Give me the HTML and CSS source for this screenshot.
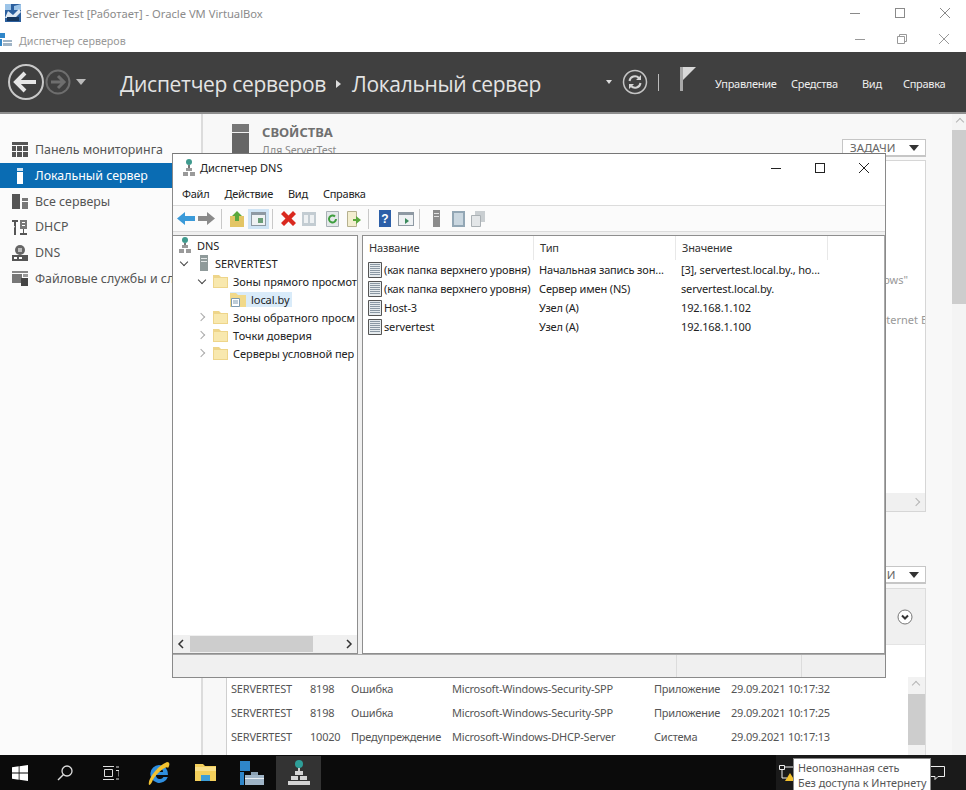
FILE: index.html
```html
<!DOCTYPE html>
<html lang="ru">
<head>
  <meta charset="UTF-8" />
  <title>Server Test [Работает] - Oracle VM VirtualBox</title>
  <link rel="stylesheet" href="styles.css">
</head>
<body>
  <!-- окно VirtualBox -->
  <div class="vbox-bar">
    <svg class="vbox-icon" width="16" height="18" viewBox="0 0 16 18">
      <rect width="16" height="18" fill="#2b5f9e"/>
      <path d="M0 0h6v6H0zM9 2l7-2v6H9z" fill="#9cc4e8"/>
      <path d="M3 7l5 4 6-6 2 3-6 6H0z" fill="#dfe9f3"/>
      <rect x="2" y="13" width="12" height="4" fill="#16375f"/>
    </svg>
    <span class="vbox-title">Server Test [Работает] - Oracle VM VirtualBox</span>
    <div class="win-btns vbox-btns">
      <svg width="12" height="12" viewBox="0 0 12 12"><path d="M1 6.500h10" stroke="#8a8a8a"/></svg>
      <svg width="12" height="12" viewBox="0 0 12 12"><rect x="1.500" y="1.500" width="9" height="9" fill="none" stroke="#8a8a8a"/></svg>
      <svg width="12" height="12" viewBox="0 0 12 12"><path d="M1 1l10 10M11 1L1 11" stroke="#8a8a8a"/></svg>
    </div>
  </div>

  <div class="app-bar">
    <svg class="app-icon" width="14" height="14" viewBox="0 0 14 14">
      <path d="M0 0h6v5H0z" fill="#2f86c9"/>
      <path d="M0 6h3v7H0z" fill="#2f86c9"/>
      <path d="M4 7h9v6H4z" fill="#9fb4c6"/>
      <path d="M4 9h9v1H4z" fill="#fff"/>
    </svg>
    <span class="app-title">Диспетчер серверов</span>
    <div class="win-btns app-btns">
      <svg width="12" height="12" viewBox="0 0 12 12"><path d="M1 6.500h10" stroke="#999"/></svg>
      <svg width="12" height="12" viewBox="0 0 12 12"><path d="M1.500 3.500h7v7h-7zM3.500 3.500v-2h7v7h-2" fill="none" stroke="#999"/></svg>
      <svg width="12" height="12" viewBox="0 0 12 12"><path d="M1 1l10 10M11 1L1 11" stroke="#999"/></svg>
    </div>
  </div>

  <header class="sm-header">
    <svg class="nav-back" width="38" height="38" viewBox="0 0 38 38">
      <circle cx="19" cy="19" r="17" fill="none" stroke="#c8c8c8" stroke-width="2"/>
      <path d="M10 19h19M18 10l-9 9 9 9" fill="none" stroke="#e6e6e6" stroke-width="4"/>
    </svg>
    <svg class="nav-fwd" width="26" height="26" viewBox="0 0 26 26">
      <circle cx="13" cy="13" r="11.500" fill="none" stroke="#6e6e6e" stroke-width="2"/>
      <path d="M6 13h13M13 7l6 6-6 6" fill="none" stroke="#6e6e6e" stroke-width="3"/>
    </svg>
    <span class="caret"></span>
    <h1 class="crumbs">Диспетчер серверов<span class="crumb-sep"></span>Локальный сервер</h1>
    <span class="caret small"></span>
    <svg class="refresh" width="26" height="26" viewBox="0 0 26 26">
      <circle cx="13" cy="13" r="11.500" fill="none" stroke="#c4c4c4" stroke-width="1.500"/>
      <path d="M7.500 12a5.500 5.500 0 0 1 9.500-3l1 1M18.500 14a5.500 5.500 0 0 1-9.500 3l-1-1" fill="none" stroke="#d4d4d4" stroke-width="2"/>
      <path d="M19 6v5h-5zM7 20v-5h5z" fill="#d4d4d4"/>
    </svg>
    <span class="head-sep"></span>
    <svg class="flag" width="18" height="26" viewBox="0 0 18 26">
      <path d="M1 1h3v24H1z" fill="#a8a8a8"/>
      <path d="M4 1h13l-13 13z" fill="#d8d8d8"/>
    </svg>
    <nav class="head-menu">
      <span class="m1">Управление</span>
      <span class="m2">Средства</span>
      <span class="m3">Вид</span>
      <span class="m4">Справка</span>
    </nav>
  </header>

  <div class="sm-main">
    <aside class="sidebar">
      <div class="side-item">
        <svg width="16" height="15" viewBox="0 0 16 15"><path d="M0 0h16v3H0zM0 4h4v5H0zM5 4h5v5H5zM11 4h5v5h-5zM0 10h4v5H0zM5 10h5v5H5zM11 10h5v5h-5z" fill="#555"/></svg>
        Панель мониторинга
      </div>
      <div class="side-item active">
        <svg width="16" height="16" viewBox="0 0 16 16"><path d="M5 0h6v3H5z" fill="#cfe3f3"/><path d="M5 4h6v12H5z" fill="#fff"/></svg>
        Локальный сервер
      </div>
      <div class="side-item">
        <svg width="16" height="16" viewBox="0 0 16 16"><path d="M0 1h8v15H0z" fill="#555"/><path d="M10 5h6v3h-6zM10 9h6v7h-6z" fill="#777"/></svg>
        Все серверы
      </div>
      <div class="side-item">
        <svg width="16" height="16" viewBox="0 0 16 16"><path d="M0 1h6v2H4v4H2V3H0zM3 7h1v9H2V9z" fill="#555"/><path d="M8 1h7v9H8z" fill="#777"/><path d="M10 3h3v1h-3zM10 6h3v1h-3z" fill="#fff"/><path d="M11 10h1v4h3v2H8v-2h3z" fill="#555"/></svg>
        DHCP
      </div>
      <div class="side-item">
        <svg width="16" height="16" viewBox="0 0 16 16"><circle cx="8" cy="5" r="5" fill="#666"/><path d="M6 3h4v4H6z" fill="#bbb"/><path d="M0 10h16v6H0z" fill="#555"/><path d="M2 12h3v2H2zM7 12h3v2H7z" fill="#fff"/></svg>
        DNS
      </div>
      <div class="side-item">
        <svg width="16" height="15" viewBox="0 0 16 15"><path d="M0 0h16v2H0z" fill="#888"/><path d="M0 3h10v9H0z" fill="#777"/><path d="M11 3h5v3h-5z" fill="#999"/><path d="M9 7h7v8H9z" fill="#444"/></svg>
        Файловые службы и сл
      </div>
    </aside>

    <main class="content">
      <section class="props">
        <div class="props-head">
          <span class="srv-icon"></span>
          <div class="props-title">
            <h2>СВОЙСТВА</h2>
            <span>Для ServerTest</span>
          </div>
          <button class="task-btn">ЗАДАЧИ<span class="caret dark"></span></button>
        </div>
        <div class="props-panel">
          <span class="peek p1">ows"</span>
          <span class="peek p2">ternet E</span>
          <div class="panel-scroll"><i class="chev right"></i></div>
        </div>
      </section>

      <section class="events">
        <button class="task-btn">ЗАДАЧИ<span class="caret dark"></span></button>
        <div class="events-panel">
          <svg width="16" height="16" viewBox="0 0 16 16"><circle cx="8" cy="8" r="7" fill="#fff" stroke="#777"/><path d="M5 6.500l3 3 3-3" fill="none" stroke="#333" stroke-width="2"/></svg>
        </div>
        <div class="events-table">
          <div class="ev-row"><span class="c-srv">SERVERTEST</span><span class="c-id">8198</span><span class="c-lvl">Ошибка</span><span class="c-src">Microsoft-Windows-Security-SPP</span><span class="c-log">Приложение</span><span>29.09.2021 10:17:32</span></div>
          <div class="ev-row"><span class="c-srv">SERVERTEST</span><span class="c-id">8198</span><span class="c-lvl">Ошибка</span><span class="c-src">Microsoft-Windows-Security-SPP</span><span class="c-log">Приложение</span><span>29.09.2021 10:17:25</span></div>
          <div class="ev-row"><span class="c-srv">SERVERTEST</span><span class="c-id">10020</span><span class="c-lvl">Предупреждение</span><span class="c-src">Microsoft-Windows-DHCP-Server</span><span class="c-log">Система</span><span>29.09.2021 10:17:13</span></div>
          <div class="ev-scroll"><i class="chev up"></i><span class="thumb"></span></div>
        </div>
      </section>
    </main>

    <div class="page-scroll"><i class="chev up"></i><span class="page-thumb"></span></div>
  </div>

  <!-- окно Диспетчер DNS -->
  <div class="dns-win">
    <div class="dns-title">
      <svg width="14" height="18" viewBox="0 0 14 18">
        <circle cx="7" cy="3" r="3" fill="#3f9a8e"/>
        <path d="M6 6h2v3H6z" fill="#777"/>
        <path d="M4 9h6v3H4zM1 13h5v4H1zM8 13h5v4H8z" fill="#9a9a9a"/>
      </svg>
      <span>Диспетчер DNS</span>
      <div class="win-btns dns-btns">
        <svg width="12" height="12" viewBox="0 0 12 12"><path d="M1 6.500h10" stroke="#222"/></svg>
        <svg width="12" height="12" viewBox="0 0 12 12"><rect x="1.500" y="1.500" width="9" height="9" fill="none" stroke="#222"/></svg>
        <svg width="12" height="12" viewBox="0 0 12 12"><path d="M1 1l10 10M11 1L1 11" stroke="#222"/></svg>
      </div>
    </div>
    <div class="dns-menu"><span>Файл</span><span>Действие</span><span>Вид</span><span>Справка</span></div>
    <div class="dns-tools">
      <svg width="18" height="13" viewBox="0 0 18 13"><path d="M0 6.500L8 0v4h10v5H8v4z" fill="#3a9ad9"/></svg>
      <svg class="ml3" width="17" height="13" viewBox="0 0 17 13"><path d="M17 6.500L9 0v4H0v5h9v4z" fill="#8a8a8a"/></svg>
      <span class="tool-sep ml6"></span>
      <svg class="ml8" width="14" height="16" viewBox="0 0 14 16"><path d="M0 5h14v11H0z" fill="#e3c565"/><path d="M7 0l5 5H9v5H5V5H2z" fill="#5aa83c"/></svg>
      <span class="tool-on ml4"><svg width="15" height="14" viewBox="0 0 15 14"><path d="M0 0h15v14H0z" fill="#8e99a3"/><path d="M1 3h13v10H1z" fill="#eef1f3"/><path d="M7 6h5v5H7z" fill="#6a9e78"/></svg></span>
      <span class="tool-sep ml3"></span>
      <svg class="ml8" width="15" height="15" viewBox="0 0 15 15"><path d="M0 3l3-3 4.500 4.500L12 0l3 3-4.500 4.500L15 12l-3 3-4.500-4.500L3 15l-3-3 4.500-4.500z" fill="#d9281e"/></svg>
      <svg class="ml6" width="14" height="16" viewBox="0 0 14 16"><path d="M0 1h14v14H0z" fill="#c3ccd2"/><path d="M2 4h4v8H2zM8 4h4v8H8z" fill="#eef1f3"/></svg>
      <svg class="ml10" width="13" height="16" viewBox="0 0 13 16"><path d="M.5.500h12v15H.5z" fill="#e4e8ea" stroke="#a9b1b6"/><path d="M10 8a3.500 3.500 0 1 1-1-2.500" fill="none" stroke="#3e9e3e" stroke-width="2"/></svg>
      <svg class="ml8" width="14" height="16" viewBox="0 0 14 16"><path d="M.5.500h9v15h-9z" fill="#f3eecf" stroke="#b5b08e"/><path d="M6 8h3V5l5 4-5 4v-3H6z" fill="#5aa83c"/></svg>
      <span class="tool-sep ml7"></span>
      <svg class="ml10" width="12" height="17" viewBox="0 0 12 17"><path d="M0 0h12v17H0z" fill="#2c5fa8"/><text x="6" y="13" class="help-q">?</text></svg>
      <svg class="ml7" width="16" height="14" viewBox="0 0 16 14"><path d="M0 0h16v14H0z" fill="#8e99a3"/><path d="M1 3h14v10H1z" fill="#eef1f3"/><path d="M7 6l4 3-4 3z" fill="#3b8a5c"/></svg>
      <span class="tool-sep ml5"></span>
      <svg class="ml13" width="7" height="17" viewBox="0 0 7 17"><path d="M0 0h7v17H0z" fill="#8c8c8c"/><path d="M1 3h5v1H1zM1 6h5v1H1z" fill="#e2e2e2"/></svg>
      <svg class="ml12" width="13" height="16" viewBox="0 0 13 16"><path d="M0 0h13v16H0z" fill="#93a7b5"/><path d="M2 2h9v12H2z" fill="#cad7e0"/></svg>
      <svg class="ml6" width="14" height="16" viewBox="0 0 14 16"><path d="M4 0h10v11H4z" fill="#c9ced1"/><path d="M.5 4.500h9v11h-9z" fill="#e3e6e8" stroke="#aab0b4"/></svg>
    </div>
    <div class="dns-body">
      <div class="tree">
        <div class="tree-rows">
          <div class="tree-row lv0"><svg width="14" height="17" viewBox="0 0 14 17"><circle cx="7" cy="3" r="3" fill="#3f9a8e"/><path d="M6 6h2v3H6z" fill="#777"/><path d="M4 8h6v3H4zM1 12h5v4H1zM8 12h5v4H8z" fill="#9a9a9a"/></svg>DNS</div>
          <div class="tree-row lv1"><i class="tw open"></i><svg width="10" height="16" viewBox="0 0 10 16"><path d="M1 0h8v16H1z" fill="#8f9a9a"/><path d="M2 3h6v1H2zM2 6h6v1H2z" fill="#e2e6e6"/></svg>SERVERTEST</div>
          <div class="tree-row lv2"><i class="tw open"></i><svg class="fold" width="15" height="14" viewBox="0 0 15 14"><path d="M0 1h6l2 2h7v11H0z" fill="#eed58a"/><path d="M1 4h13v9H1z" fill="#f8e8ae"/></svg>Зоны прямого просмот</div>
          <div class="tree-row lv3"><span class="sel"><svg width="16" height="15" viewBox="0 0 16 15"><path d="M0 1h6l2 2h8v12H0z" fill="#f1d98a"/><path d="M1.500 6.500h8v8h-8z" fill="#fff" stroke="#7c9ab0"/><path d="M3 9h5M3 11h5" stroke="#7c9ab0"/></svg>local.by</span></div>
          <div class="tree-row lv2"><i class="tw"></i><svg class="fold" width="15" height="14" viewBox="0 0 15 14"><path d="M0 1h6l2 2h7v11H0z" fill="#eed58a"/><path d="M1 4h13v9H1z" fill="#f8e8ae"/></svg>Зоны обратного просм</div>
          <div class="tree-row lv2"><i class="tw"></i><svg class="fold" width="15" height="14" viewBox="0 0 15 14"><path d="M0 1h6l2 2h7v11H0z" fill="#eed58a"/><path d="M1 4h13v9H1z" fill="#f8e8ae"/></svg>Точки доверия</div>
          <div class="tree-row lv2"><i class="tw"></i><svg class="fold" width="15" height="14" viewBox="0 0 15 14"><path d="M0 1h6l2 2h7v11H0z" fill="#eed58a"/><path d="M1 4h13v9H1z" fill="#f8e8ae"/></svg>Серверы условной пер</div>
        </div>
        <div class="tree-scroll">
          <svg width="8" height="10" viewBox="0 0 8 10"><path d="M6 1L2 5l4 4" fill="none" stroke="#333" stroke-width="1.500"/></svg>
          <span class="h-thumb"></span>
          <svg width="8" height="10" viewBox="0 0 8 10"><path d="M2 1l4 4-4 4" fill="none" stroke="#333" stroke-width="1.500"/></svg>
        </div>
      </div>
      <div class="list">
        <div class="list-head"><span class="col-a">Название</span><span class="col-b">Тип</span><span class="col-c">Значение</span></div>
        <div class="list-row"><svg class="rec" width="14" height="16" viewBox="0 0 14 16"><path class="rec-box" d="M.5.500h13v15H.5z"/><path class="rec-ln" d="M2 2.500h10M2 4.500h10M2 6.500h10M2 8.500h10M2 10.500h10M2 12.500h10"/></svg><span class="col-a">(как папка верхнего уровня)</span><span class="col-b">Начальная запись зон...</span><span class="col-c">[3], servertest.local.by., ho...</span></div>
        <div class="list-row"><svg class="rec" width="14" height="16" viewBox="0 0 14 16"><path class="rec-box" d="M.5.500h13v15H.5z"/><path class="rec-ln" d="M2 2.500h10M2 4.500h10M2 6.500h10M2 8.500h10M2 10.500h10M2 12.500h10"/></svg><span class="col-a">(как папка верхнего уровня)</span><span class="col-b">Сервер имен (NS)</span><span class="col-c">servertest.local.by.</span></div>
        <div class="list-row"><svg class="rec" width="14" height="16" viewBox="0 0 14 16"><path class="rec-box" d="M.5.500h13v15H.5z"/><path class="rec-ln" d="M2 2.500h10M2 4.500h10M2 6.500h10M2 8.500h10M2 10.500h10M2 12.500h10"/></svg><span class="col-a">Host-3</span><span class="col-b">Узел (A)</span><span class="col-c">192.168.1.102</span></div>
        <div class="list-row"><svg class="rec" width="14" height="16" viewBox="0 0 14 16"><path class="rec-box" d="M.5.500h13v15H.5z"/><path class="rec-ln" d="M2 2.500h10M2 4.500h10M2 6.500h10M2 8.500h10M2 10.500h10M2 12.500h10"/></svg><span class="col-a">servertest</span><span class="col-b">Узел (A)</span><span class="col-c">192.168.1.100</span></div>
      </div>
    </div>
    <div class="dns-status"><span class="st1"></span><span class="st2"></span><span class="st3"></span></div>
  </div>

  <footer class="taskbar">
    <svg class="tb-start" width="16" height="16" viewBox="0 0 16 16"><path d="M0 2.300l6.700-1v6.300H0zM7.500 1.200L16 0v7.600H7.500zM0 8.400h6.700v6.300l-6.700-1zM7.500 8.400H16V16l-8.500-1.200z" fill="#fff"/></svg>
    <svg class="tb-search" width="16" height="16" viewBox="0 0 16 16"><circle cx="10" cy="6" r="5" fill="none" stroke="#ddd" stroke-width="1.300"/><path d="M6.500 9.500L1 15" stroke="#ddd" stroke-width="1.500"/></svg>
    <svg class="tb-tasks" width="16" height="14" viewBox="0 0 16 14"><path d="M0 .5h11M0 13.500h11M1.500 3.500h8v7h-8zM13 1h3M13 4.500h3v6M13 13h3" fill="none" stroke="#ddd"/></svg>
    <svg class="tb-ie" width="22" height="26" viewBox="0 0 22 26">
      <path d="M11 5a9 9 0 0 1 9 10H8a4 4 0 0 0 7.500 2h4.300A9 9 0 1 1 11 5zM8 12h7a3.500 3.500 0 0 0-7 0z" fill="#2f8fe0" fill-rule="evenodd"/>
      <path d="M1 25C-1 20 9 6 19 2c3 0 3 3 1 6-1-4-14 7-16 14-1 2-2 3-3 3z" fill="#f2c230"/>
    </svg>
    <svg class="tb-files" width="21" height="17" viewBox="0 0 21 17"><path d="M0 0h8l2 2h11v15H0z" fill="#f3cf5b"/><path d="M0 3h21v4H0z" fill="#f9e08a"/><path d="M6 11h9v6H6z" fill="#3d9ed6"/></svg>
    <svg class="tb-sm" width="24" height="24" viewBox="0 0 24 24"><path d="M0 0h10v10H0zM0 11h4v13H0z" fill="#2f86c9"/><path d="M5 14h19v10H5z" fill="#9fb4c6"/><path d="M5 17h19v1H5z" fill="#e9eef2"/><path d="M11 11h7v3h-7z" fill="#8aa0b2"/></svg>
    <span class="tb-active">
      <svg width="22" height="26" viewBox="0 0 22 26"><circle cx="11" cy="4" r="4" fill="#2e9e98"/><path d="M10 8h2v4h-2z" fill="#ccc"/><path d="M7 11h8v4H7zM3 16h7v4H3zM12 16h7v4h-7zM0 21h22v4H0z" fill="#d5d5d5"/></svg>
    </span>
    <div class="tray">
      <svg class="tray-net" width="16" height="18" viewBox="0 0 16 18"><path d="M.5 1.500h5v4h-5zM3 6v8h5M6 3h9" fill="none" stroke="#eee"/><path d="M11 9l5 8H6z" fill="#f3c12d"/></svg>
      <div class="net-tip">
        <div>Неопознанная сеть</div>
        <div>Без доступа к Интернету</div>
      </div>
      <svg class="tray-note" width="16" height="16" viewBox="0 0 16 16"><path d="M.5 1.500h15v10H9l-3 3v-3H.5z" fill="none" stroke="#eee"/></svg>
    </div>
  </footer>
</body>
</html>
```

FILE: styles.css
```css
* {
  box-sizing: border-box;
}
html, body {
  height: 100%;
}
body {
  margin: 0;
  width: 966px;
  height: 790px;
  overflow: hidden;
  position: relative;
  display: flex;
  flex-direction: column;
  background: #fff;
  font-family: 'Noto Sans', 'Open Sans', sans-serif;
  font-size: 11px;
  color: #333;
}
svg {
  flex: none;
  display: block;
}
.ml3 { margin-left: 3px; }
.ml4 { margin-left: 4px; }
.ml5 { margin-left: 5px; }
.ml6 { margin-left: 6px; }
.ml7 { margin-left: 7px; }
.ml8 { margin-left: 8px; }
.ml10 { margin-left: 10px; }
.ml12 { margin-left: 12px; }
.ml13 { margin-left: 13px; }

/* стрелки полос прокрутки */
.chev {
  position: absolute;
  width: 6px;
  height: 6px;
  border-top: 1.5px solid #b5b5b5;
  border-left: 1.5px solid #b5b5b5;
}
.chev.up {
  top: 5px;
  left: 5px;
  transform: rotate(45deg);
}
.chev.right {
  top: 6px;
  right: 6px;
  transform: rotate(135deg);
}

/* верхние заголовки */
.vbox-bar, .app-bar {
  height: 26px;
  display: flex;
  align-items: center;
  background: #fff;
  flex: none;
}
.vbox-bar {
  padding-left: 5px;
}
.vbox-title {
  margin-left: 5px;
  font-size: 11.2px;
  color: #8b8b8b;
}
.app-icon {
  margin: 2px 0 0 -1px;
}
.app-title {
  margin: 4px 0 0 6px;
  font-size: 10.7px;
  color: #999;
}
.win-btns {
  margin-left: auto;
  display: flex;
  align-items: center;
}
.vbox-btns {
  gap: 33px;
  padding-right: 15px;
}
.app-btns {
  gap: 30px;
  padding-right: 16px;
}

/* шапка диспетчера серверов */
.sm-header {
  height: 62px;
  flex: none;
  display: flex;
  align-items: center;
  background: #404040;
  border-bottom: 2px solid #8e8e8e;
  color: #eee;
}
.nav-back {
  margin-left: 7px;
}
.caret {
  display: inline-block;
  width: 0;
  height: 0;
  margin-left: 5px;
  border-left: 5px solid transparent;
  border-right: 5px solid transparent;
  border-top: 6px solid #bbb;
}
.caret.small {
  margin-left: 0;
  border-left-width: 3px;
  border-right-width: 3px;
  border-top-width: 4px;
  border-top-color: #ddd;
}
.caret.dark {
  margin-left: 0;
  border-top-color: #333;
}
.crumbs {
  margin: 3px 0 0 34px;
  width: 486px;
  flex: none;
  font-weight: 400;
  font-size: 21px;
  line-height: 30px;
  color: #e4e4e4;
  white-space: nowrap;
  font-family: 'Open Sans', sans-serif;
  letter-spacing: -0.3px;
}
.crumb-sep {
  display: inline-block;
  margin: 0 11px 4px 10px;
  border-left: 5px solid #ddd;
  border-top: 4px solid transparent;
  border-bottom: 4px solid transparent;
}
.refresh {
  margin-left: 10px;
}
.head-sep {
  width: 1px;
  height: 17px;
  margin-left: 10px;
  background: #bbb;
}
.flag {
  margin-left: 20px;
  margin-bottom: 6px;
}
.head-menu {
  margin: 2px 0 0 18px;
  display: flex;
  font-size: 11px;
  letter-spacing: -0.3px;
  color: #eee;
  white-space: nowrap;
}
.m1 { width: 76px; }
.m2 { width: 71px; }
.m3 { width: 41px; }

/* основная часть */
.sm-main {
  flex: 1;
  min-height: 0;
  display: flex;
  background: #f8f8f8;
}
.sidebar {
  width: 203px;
  flex: none;
  padding-top: 23px;
  background: #fbfbfb;
  border-right: 2px solid #dcdcdc;
}
.side-item {
  height: 25.7px;
  padding-left: 12px;
  display: flex;
  align-items: center;
  gap: 7px;
  font-size: 12.4px;
  color: #555;
  white-space: nowrap;
}
.side-item.active {
  background: #0a6cb3;
  color: #fff;
}
.content {
  width: 749px;
  flex: none;
  padding: 0 26px 0 23px;
  overflow: hidden;
}
.props-head {
  height: 46px;
  display: flex;
}
.srv-icon {
  margin: 10px 0 0 6px;
  width: 17px;
  height: 36px;
  background: linear-gradient(#777 0 8px, #f0f0f0 8px 9px, #666 9px);
}
.props-title {
  margin: 8px 0 0 13px;
  font-size: 10.5px;
  color: #888;
  line-height: 16px;
}
.props-title h2 {
  margin: 0;
  font-size: 13px;
  line-height: 20px;
  color: #707070;
  font-weight: 700;
}
.task-btn {
  margin: 25px 0 0 auto;
  width: 84px;
  height: 18px;
  padding: 0 6px 0 7px;
  display: flex;
  align-items: center;
  justify-content: space-between;
  border: 1px solid #c6c6c6;
  border-bottom-width: 2px;
  background: #fff;
  font: 11.5px 'Noto Sans', sans-serif;
  color: #666;
}
.props-panel {
  position: relative;
  height: 352px;
  border: 1px solid #d6d6d6;
  background: #fff;
  overflow: hidden;
}
.peek {
  position: absolute;
  font-size: 11px;
  color: #999;
  white-space: nowrap;
}
.p1 { top: 111px; right: 17px; }
.p2 { top: 151px; right: -2px; }
.panel-scroll {
  position: absolute;
  left: 0;
  right: 0;
  bottom: 0;
  height: 18px;
  background: #f0f0f0;
}
.events {
  padding-top: 54px;
}
.events .task-btn {
  margin-top: 0;
}
.events-panel {
  height: 57px;
  margin-top: 4px;
  display: flex;
  justify-content: flex-end;
  align-items: center;
  padding-right: 12px;
  background: #f0f0f0;
  border: 1px solid #dcdcdc;
  border-bottom-color: #e4e4e4;
}
.events-table {
  position: relative;
  height: 110px;
  padding-top: 31px;
  background: #fff;
  border-left: 1px solid #cfcfcf;
  border-right: 1px solid #dcdcdc;
}
.ev-row {
  height: 24px;
  padding-left: 4px;
  display: flex;
  align-items: center;
  font-size: 11px;
  letter-spacing: -0.2px;
  color: #555;
  white-space: nowrap;
}
.c-srv { width: 79px; }
.c-id { width: 41px; }
.c-lvl { width: 101px; }
.c-src { width: 202px; }
.c-log { width: 77px; }
.ev-scroll {
  position: absolute;
  top: 32px;
  right: 0;
  width: 17px;
  height: 78px;
  background: #f2f2f2;
}
.ev-scroll .thumb {
  position: absolute;
  top: 17px;
  left: 0;
  width: 17px;
  height: 51px;
  background: #cdcdcd;
}
.page-scroll {
  position: relative;
  flex: 1;
  background: #f4f4f4;
}
.page-thumb {
  position: absolute;
  top: 16px;
  left: 0;
  right: 0;
  height: 174px;
  background: #cdcdcd;
}

/* окно DNS */
.dns-win {
  position: absolute;
  left: 172px;
  top: 153px;
  width: 714px;
  height: 525px;
  display: flex;
  flex-direction: column;
  background: #f0f0f0;
  border: 1px solid #8a8a8a;
  border-top-color: #777;
  color: #222;
}
.dns-title {
  height: 27px;
  flex: none;
  padding-left: 9px;
  display: flex;
  align-items: center;
  gap: 4px;
  background: #fff;
  font-size: 11px;
}
.dns-btns {
  gap: 32px;
  padding-right: 15px;
}
.dns-menu {
  height: 24px;
  flex: none;
  padding-left: 9px;
  display: flex;
  align-items: center;
  gap: 15px;
  background: #fff;
  font-size: 11px;
  letter-spacing: -0.25px;
}
.dns-tools {
  height: 27px;
  flex: none;
  margin-bottom: 3px;
  padding-left: 4px;
  display: flex;
  align-items: center;
  background: #fbfbfb;
  border-top: 1px solid #dcdcdc;
  border-bottom: 1px solid #dcdcdc;
}
.tool-sep {
  width: 1px;
  height: 20px;
  background: #c8c8c8;
}
.tool-on {
  width: 21px;
  padding: 3px;
  background: #cfe4f5;
}
.help-q {
  font: 700 12px 'Liberation Sans', sans-serif;
  fill: #fff;
  text-anchor: middle;
}
.dns-body {
  flex: 1;
  min-height: 0;
  display: flex;
  gap: 4px;
  background: #f0f0f0;
}
.tree {
  width: 185px;
  flex: none;
  display: flex;
  flex-direction: column;
  background: #fff;
  border: 1px solid #8e8e8e;
  border-left: 0;
}
.tree-rows {
  flex: 1;
  overflow: hidden;
}
.tree-row {
  height: 18px;
  display: flex;
  align-items: center;
  font-size: 11px;
  letter-spacing: -0.05px;
  white-space: nowrap;
  overflow: hidden;
}
.tree-row svg {
  margin-right: 5px;
}
.lv0 { padding-left: 5px; }
.lv1 { padding-left: 7px; }
.lv1 svg { margin: 0 6px 0 4px; }
.lv2 { padding-left: 25px; }
.lv3 { padding-left: 57px; }
.sel {
  display: flex;
  align-items: center;
  padding-right: 2px;
  background: #d9ebf9;
}
.tw {
  flex: none;
  width: 8px;
  height: 8px;
  margin-right: 7px;
  position: relative;
}
.tw::before {
  content: "";
  position: absolute;
  left: 0;
  top: 1px;
  width: 5px;
  height: 5px;
  border-right: 1.5px solid #aaa;
  border-bottom: 1.5px solid #aaa;
  transform: rotate(-45deg);
}
.tw.open::before {
  left: 1px;
  top: 0;
  border-color: #444;
  transform: rotate(45deg);
}
.tree-scroll {
  height: 18px;
  flex: none;
  display: flex;
  align-items: center;
  justify-content: space-between;
  padding: 0 4px;
  background: #f0f0f0;
}
.h-thumb {
  width: 123px;
  height: 16px;
  margin-left: 5px;
  margin-right: auto;
  background: #cdcdcd;
}
.list {
  flex: 1;
  background: #fff;
  border: 1px solid #8e8e8e;
  border-right-color: #aaa;
}
.list-head {
  height: 24px;
  display: flex;
  font-size: 11px;
  letter-spacing: -0.15px;
  color: #333;
}
.list-head span {
  padding-left: 6px;
  line-height: 24px;
  border-right: 1px solid #e8e8e8;
}
.list-head .col-a { width: 171px; }
.list-head .col-b { width: 142px; }
.list-head .col-c { width: 152px; }
.list-row {
  height: 19px;
  display: flex;
  align-items: center;
  padding-left: 5px;
  font-size: 11px;
  letter-spacing: -0.15px;
  white-space: nowrap;
}
.rec {
  margin-right: 2px;
}
.rec-box { fill: #e6ebee; stroke: #555; }
.rec-ln { stroke: #8a97a3; }
.list-row .col-a { width: 155px; }
.list-row .col-b { width: 142px; }
.dns-status {
  height: 23px;
  flex: none;
  display: flex;
  background: #f0f0f0;
  border-top: 1px solid #aaa;
}
.st1 { width: 504px; border-right: 1px solid #dcdcdc; }
.st2 { width: 125px; border-right: 1px solid #dcdcdc; }

/* панель задач */
.taskbar {
  position: relative;
  height: 35px;
  flex: none;
  display: flex;
  align-items: center;
  background: #0b0b0b;
}
.tb-start { margin-left: 12px; }
.tb-search { margin-left: 29px; }
.tb-tasks { margin-left: 30px; }
.tb-ie { margin-left: 29px; }
.tb-files { margin-left: 25px; }
.tb-sm { margin-left: 24px; }
.tb-active {
  margin-left: 12px;
  width: 45px;
  height: 34px;
  display: flex;
  align-items: center;
  justify-content: center;
  background: #333;
}
.tray {
  margin-left: auto;
  width: 190px;
  height: 100%;
  display: flex;
  align-items: center;
  background: #1a1a1a;
  position: relative;
}
.tray-net { margin-left: 3px; }
.tray-note {
  margin-left: auto;
  margin-right: 21px;
}
.net-tip {
  position: absolute;
  left: 17px;
  top: 3px;
  width: 138px;
  height: 32px;
  padding: 1px 0 0 4px;
  background: #fff;
  border: 1px solid #888;
  border-bottom: 0;
  font-size: 10.8px;
  line-height: 15px;
  color: #555;
  white-space: nowrap;
  overflow: hidden;
}
```
